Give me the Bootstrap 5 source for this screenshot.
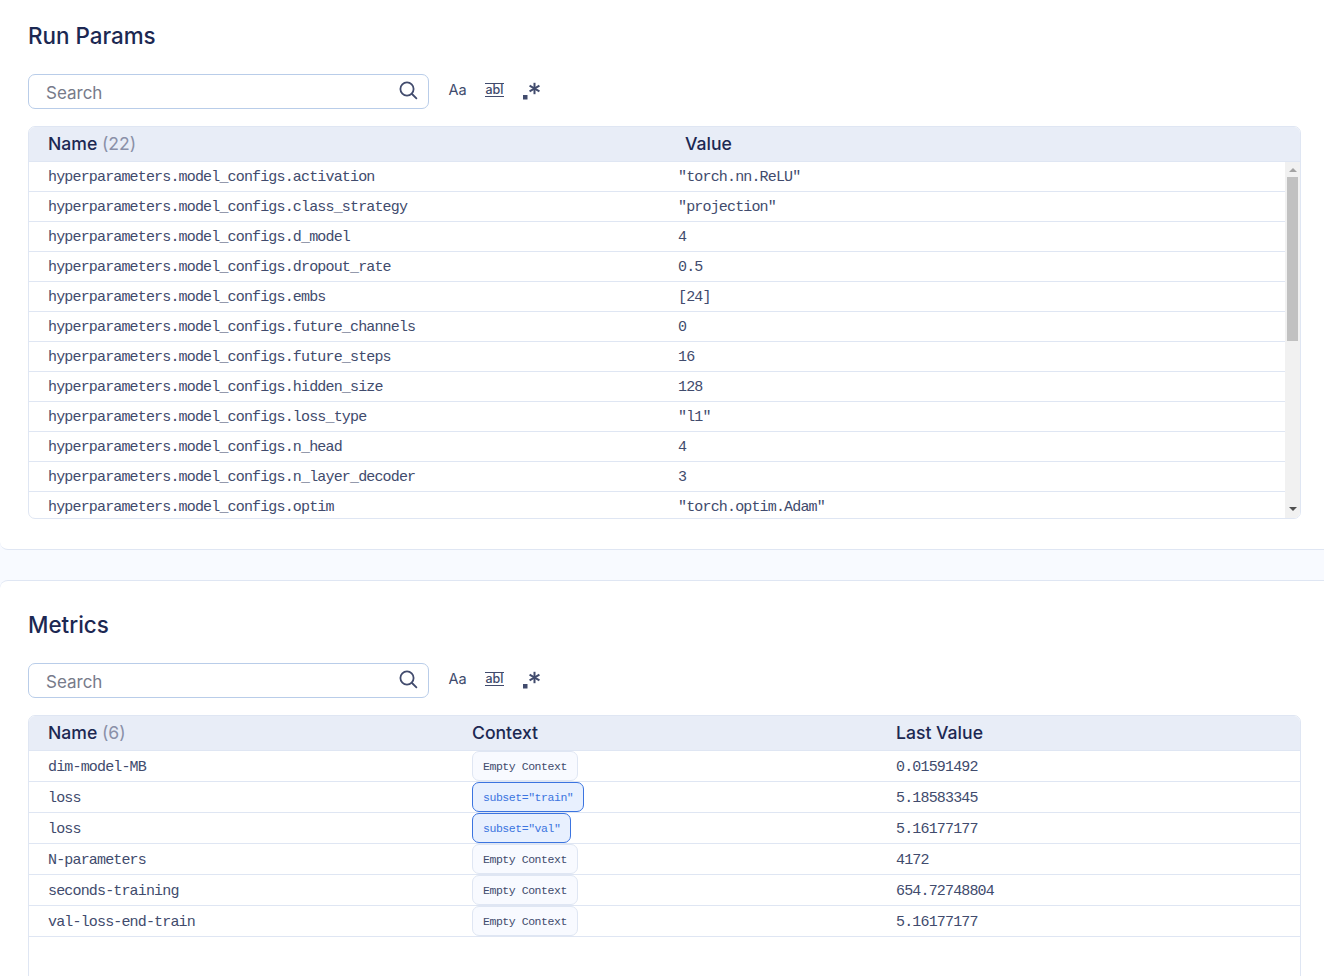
<!DOCTYPE html>
<html lang="en">
<head>
    <meta charset="UTF-8">
    <meta name="viewport" content="width=device-width, initial-scale=1.0">
    <title>Run</title>
    <link href="https://cdn.jsdelivr.net/npm/bootstrap@5.3.0/dist/css/bootstrap.min.css" rel="stylesheet">
    <style>
        html, body {
            height: 100%;
            overflow: hidden;
        }
        body {
            background-color: #f8faff;
            font-family: "Inter", "Liberation Sans", sans-serif;
            color: #1c2852;
        }
        .panel-box {
            background: #fff;
            padding: 0 23px 0 28px;
            border-color: #dfe6f3;
            border-style: solid;
            border-width: 0;
        }
        .panel-top {
            padding-top: 21px;
            padding-bottom: 30px;
            border-bottom-width: 1px;
            border-bottom-left-radius: 8px;
        }
        .panel-bottom {
            margin-top: 30px;
            padding-top: 29px;
            height: 420px;
            border-top-width: 1px;
            border-top-left-radius: 8px;
        }
        .panel-title {
            font-size: 22.4px;
            line-height: 30px;
            font-weight: 500;
            margin: 0 0 23px;
        }
        .search-box {
            width: 401px;
            height: 35px;
        }
        .search-box .form-control {
            height: 35px;
            padding: 2px 40px 0 17px;
            font-size: 17px;
            font-family: inherit;
            color: #1c2852;
            border: 1px solid #b9cde9;
            border-radius: 7px;
        }
        .search-box .form-control::placeholder {
            color: #777b8a;
        }
        .search-icon {
            position: absolute;
            right: 11px;
            top: 6px;
        }
        .tool-row {
            margin-left: 10px;
            margin-top: -3px;
        }
        .tool-icon {
            width: 37px;
            height: 20px;
            color: #414b6d;
            font-size: 14.5px;
        }
        .tool-word {
            font-size: 12.5px;
            font-weight: 500;
            line-height: 12px;
            padding: 0 1px;
            border-top: 1px solid #414b6d;
            border-bottom: 1px solid #414b6d;
        }
        .data-box {
            margin-top: 17px;
            border: 1px solid #dfe6f3;
            border-radius: 7px;
            overflow: hidden;
        }
        .data-head {
            display: grid;
            align-items: center;
            background: #e8edf7;
            border-bottom: 1px solid #dfe6f3;
            font-size: 17.6px;
            font-weight: 500;
            padding-left: 19px;
            padding-top: 1px;
        }
        .data-head.params-cols,
        .data-head.metrics-cols {
            height: 35px;
        }
        .head-count {
            color: #8a90a8;
            font-weight: 400;
        }
        .data-scroll {
            height: 356px;
        }
        .data-rows {
            overflow: hidden;
        }
        .scroll-track {
            width: 15px;
            background: #f1f1f1;
            padding: 0 2px;
        }
        .scroll-thumb {
            height: 164px;
            background: #c1c1c1;
        }
        .arrow-up, .arrow-down {
            width: 0;
            margin-left: auto;
            margin-right: auto;
            border-left: 4px solid transparent;
            border-right: 4px solid transparent;
        }
        .arrow-up {
            margin-top: 6px;
            margin-bottom: 5px;
            border-bottom: 4px solid #a3a3a3;
        }
        .arrow-down {
            margin-top: auto;
            margin-bottom: 7px;
            border-top: 4px solid #505050;
        }
        .data-line {
            display: grid;
            align-items: center;
            padding-left: 19px;
            padding-top: 4px;
            border-bottom: 1px solid #dfe6f3;
            font-family: "Liberation Mono", monospace;
            font-size: 15px;
            letter-spacing: -0.84px;
            color: #414b6d;
        }
        .params-cols {
            grid-template-columns: 630px 1fr;
            height: 30px;
        }
        .metrics-cols {
            grid-template-columns: 424px 424px 1fr;
            height: 31px;
        }
        .data-line.metrics-cols {
            padding-top: 0;
        }
        .metrics-name, .metrics-value {
            padding-top: 4px;
        }
        .head-value {
            padding-left: 7px;
        }
        .metrics-box {
            height: 420px;
        }
        .ctx-chip {
            display: block;
            width: fit-content;
            height: 30px;
            line-height: 30px;
            padding: 0 10px;
            font-size: 11.5px;
            letter-spacing: -0.45px;
            color: #414b6d;
            background: #f8faff;
            border: 1px solid #dfe6f3;
            border-radius: 7px;
        }
        .ctx-chip.ctx-set {
            color: #3b74e0;
            background: #e8f0fe;
            border-color: #3b74e0;
        }
    </style>
</head>
<body>
    <section class="panel-box panel-top">
        <h2 class="panel-title">Run Params</h2>
        <div class="d-flex align-items-center">
            <div class="search-box position-relative">
                <input type="text" class="form-control" placeholder="Search">
                <svg class="search-icon" width="20" height="20" viewBox="0 0 20 20" fill="none" stroke="#414b6d" stroke-width="1.8" stroke-linecap="round"><circle cx="9" cy="9" r="6.6"/><path d="M14 14l4.4 4.4"/></svg>
            </div>
            <div class="tool-row d-flex align-items-center">
                <span class="tool-icon d-flex align-items-center justify-content-center">Aa</span>
                <span class="tool-icon d-flex align-items-center justify-content-center"><span class="tool-word">abl</span></span>
                <span class="tool-icon d-flex align-items-center justify-content-center">
                    <svg width="20" height="20" viewBox="0 0 20 20" fill="#414b6d"><rect x="1" y="15" width="4.5" height="4.5"/><g transform="translate(12.500 8.500)"><rect x="-1" y="-5.700" width="2" height="11.400"/><rect x="-1" y="-5.700" width="2" height="11.400" transform="rotate(60)"/><rect x="-1" y="-5.700" width="2" height="11.400" transform="rotate(120)"/></g></svg>
                </span>
            </div>
        </div>
        <div class="data-box">
            <div class="data-head params-cols">
                <div>Name <span class="head-count">(22)</span></div>
                <div class="head-value">Value</div>
            </div>
            <div class="data-scroll d-flex">
                <div class="data-rows flex-grow-1">
                    <div class="data-line params-cols"><div>hyperparameters.model_configs.activation</div><div>"torch.nn.ReLU"</div></div>
                    <div class="data-line params-cols"><div>hyperparameters.model_configs.class_strategy</div><div>"projection"</div></div>
                    <div class="data-line params-cols"><div>hyperparameters.model_configs.d_model</div><div>4</div></div>
                    <div class="data-line params-cols"><div>hyperparameters.model_configs.dropout_rate</div><div>0.5</div></div>
                    <div class="data-line params-cols"><div>hyperparameters.model_configs.embs</div><div>[24]</div></div>
                    <div class="data-line params-cols"><div>hyperparameters.model_configs.future_channels</div><div>0</div></div>
                    <div class="data-line params-cols"><div>hyperparameters.model_configs.future_steps</div><div>16</div></div>
                    <div class="data-line params-cols"><div>hyperparameters.model_configs.hidden_size</div><div>128</div></div>
                    <div class="data-line params-cols"><div>hyperparameters.model_configs.loss_type</div><div>"l1"</div></div>
                    <div class="data-line params-cols"><div>hyperparameters.model_configs.n_head</div><div>4</div></div>
                    <div class="data-line params-cols"><div>hyperparameters.model_configs.n_layer_decoder</div><div>3</div></div>
                    <div class="data-line params-cols"><div>hyperparameters.model_configs.optim</div><div>"torch.optim.Adam"</div></div>
                </div>
                <div class="scroll-track d-flex flex-column flex-shrink-0">
                    <div class="arrow-up"></div>
                    <div class="scroll-thumb"></div>
                    <div class="arrow-down"></div>
                </div>
            </div>
        </div>
    </section>

    <section class="panel-box panel-bottom">
        <h2 class="panel-title">Metrics</h2>
        <div class="d-flex align-items-center">
            <div class="search-box position-relative">
                <input type="text" class="form-control" placeholder="Search">
                <svg class="search-icon" width="20" height="20" viewBox="0 0 20 20" fill="none" stroke="#414b6d" stroke-width="1.8" stroke-linecap="round"><circle cx="9" cy="9" r="6.6"/><path d="M14 14l4.4 4.4"/></svg>
            </div>
            <div class="tool-row d-flex align-items-center">
                <span class="tool-icon d-flex align-items-center justify-content-center">Aa</span>
                <span class="tool-icon d-flex align-items-center justify-content-center"><span class="tool-word">abl</span></span>
                <span class="tool-icon d-flex align-items-center justify-content-center">
                    <svg width="20" height="20" viewBox="0 0 20 20" fill="#414b6d"><rect x="1" y="15" width="4.5" height="4.5"/><g transform="translate(12.500 8.500)"><rect x="-1" y="-5.700" width="2" height="11.400"/><rect x="-1" y="-5.700" width="2" height="11.400" transform="rotate(60)"/><rect x="-1" y="-5.700" width="2" height="11.400" transform="rotate(120)"/></g></svg>
                </span>
            </div>
        </div>
        <div class="data-box metrics-box">
            <div class="data-head metrics-cols">
                <div>Name <span class="head-count">(6)</span></div>
                <div>Context</div>
                <div>Last Value</div>
            </div>
            <div class="data-line metrics-cols"><div class="metrics-name">dim-model-MB</div><div><span class="ctx-chip">Empty Context</span></div><div class="metrics-value">0.01591492</div></div>
            <div class="data-line metrics-cols"><div class="metrics-name">loss</div><div><span class="ctx-chip ctx-set">subset="train"</span></div><div class="metrics-value">5.18583345</div></div>
            <div class="data-line metrics-cols"><div class="metrics-name">loss</div><div><span class="ctx-chip ctx-set">subset="val"</span></div><div class="metrics-value">5.16177177</div></div>
            <div class="data-line metrics-cols"><div class="metrics-name">N-parameters</div><div><span class="ctx-chip">Empty Context</span></div><div class="metrics-value">4172</div></div>
            <div class="data-line metrics-cols"><div class="metrics-name">seconds-training</div><div><span class="ctx-chip">Empty Context</span></div><div class="metrics-value">654.72748804</div></div>
            <div class="data-line metrics-cols"><div class="metrics-name">val-loss-end-train</div><div><span class="ctx-chip">Empty Context</span></div><div class="metrics-value">5.16177177</div></div>
        </div>
    </section>

    <script src="https://cdn.jsdelivr.net/npm/bootstrap@5.3.0/dist/js/bootstrap.bundle.min.js"></script>
</body>
</html>
